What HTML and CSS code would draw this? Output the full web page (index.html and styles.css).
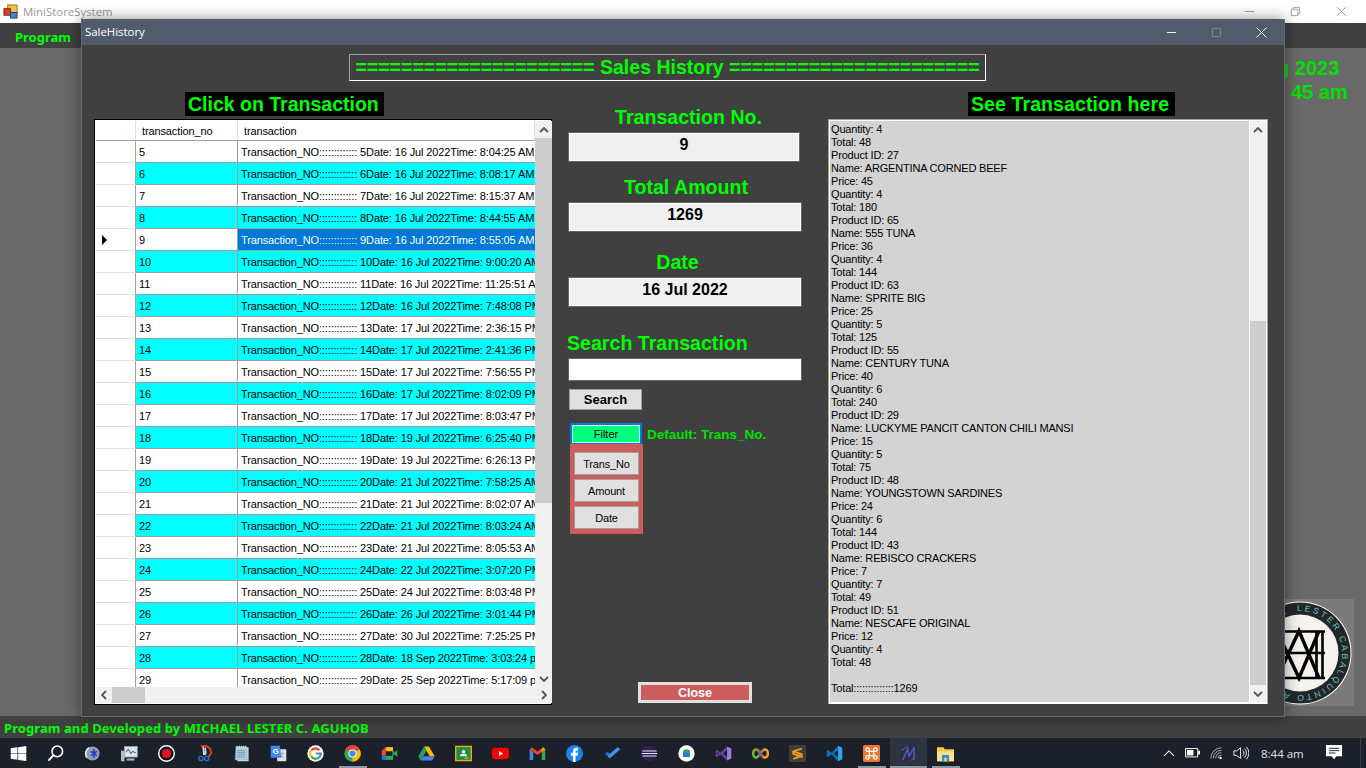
FILE: index.html
```html
<!DOCTYPE html>
<html lang="en">
<head>
    <meta charset="UTF-8">
    <title>MiniStoreSystem</title>
    <link rel="stylesheet" href="styles.css">
</head>
<body>
<div class="desktop">
    <div class="main-title">
        <svg class="app-icon" viewBox="0 0 16 16"><rect x="5" y="1" width="10" height="8" fill="#f0c040" stroke="#a07010"/><rect x="1" y="5" width="7" height="7" fill="#d84030" stroke="#802010"/><rect x="8" y="9" width="7" height="6" fill="#5080d0" stroke="#204080"/></svg>
        <span class="main-name">MiniStoreSystem</span>
        <div class="win-buttons main-buttons">
            <svg viewBox="0 0 12 12"><path d="M1 6h10" stroke="#999" fill="none"/></svg>
            <svg viewBox="0 0 12 12"><path d="M1.5 3.5h7v7h-7zM3.5 3.5v-2h7v7h-2" stroke="#999" fill="none"/></svg>
            <svg viewBox="0 0 12 12"><path d="M1 1l10 10M11 1L1 11" stroke="#999" fill="none"/></svg>
        </div>
    </div>
    <div class="menu-strip"><span class="menu-item">Program</span></div>
    <div class="main-area">
        <div class="clock-text">
            <div class="clock-date">g 2023</div>
            <div class="clock-time">45 am</div>
        </div>
        <div class="logo-square">
            <svg class="logo" viewBox="0 0 106 106">
                <defs><path id="ring" d="M53 11a42 42 0 1 1-.01 0"/></defs>
                <circle cx="53" cy="53" r="51.500" fill="#fff"/>
                <circle cx="53" cy="53" r="50.500" fill="#22282a"/>
                <circle cx="53" cy="53" r="38.500" fill="#f6f3ee"/>
                <text class="logo-ring" fill="#6fc4c0" transform="rotate(-4 53 53)"><textPath href="#ring">LESTER CABALQUINTO AGUHOB MICHAEL</textPath></text>
                <path d="M24 31.500h54M24 53h54M24 78h54M69.500 31v47M75.500 31v47" stroke="#000" stroke-width="2.600" fill="none"/>
                <path d="M30 31l22 47 20-47M30 78l22-47 20 47" stroke="#000" stroke-width="3.400" fill="none"/>
            </svg>
        </div>
    </div>
    <div class="status-strip">Program and Developed by MICHAEL LESTER C. AGUHOB</div>

    <div class="taskbar">
        <div class="task-icons">
            <span class="task"><svg viewBox="0 0 24 24"><path fill="#fff" d="M1 4.500l9.500-1.300V11.500H1zM11.500 3L23 1.500v10H11.500zM1 12.500h9.500v8.300L1 19.500zM11.500 12.500H23v10L11.500 21z"/></svg></span>
            <span class="task"><svg viewBox="0 0 24 24"><circle cx="14.500" cy="9" r="7.500" fill="none" stroke="#fff" stroke-width="2.200"/><path d="M9 14.500L2 22" stroke="#fff" stroke-width="2.800"/></svg></span>
            <span class="task"><svg viewBox="0 0 24 24"><circle cx="12" cy="12" r="10" fill="#8d9bb5"/><path d="M7 4a10 10 0 0 0-3 14" stroke="#dfe6f0" stroke-width="2.500" fill="none"/><path d="M14 6v12M10 9l8 6M18 9l-8 6" stroke="#2240d0" stroke-width="2.400"/></svg></span>
            <span class="task"><svg viewBox="0 0 24 24"><rect x="5" y="2" width="18" height="15" fill="#dfe6ea" stroke="#9aa4ac"/><path d="M7 10l3-4 4 6 2-3 5 2" stroke="#2f7fc4" fill="none" stroke-width="1.600"/><rect x="0" y="8" width="5" height="15" fill="#b8bec4"/><rect x="8" y="19" width="11" height="3" fill="#aab0b6"/></svg></span>
            <span class="task"><svg viewBox="0 0 24 24"><circle cx="12" cy="12" r="11" fill="#111" stroke="#fff" stroke-width="2"/><circle cx="12" cy="12" r="6.500" fill="#e81123"/></svg></span>
            <span class="task"><svg viewBox="0 0 24 24"><path d="M12 1a11 9 0 0 1 8 13l-3 3" stroke="#c8401c" stroke-width="3" fill="none"/><path d="M7 2a10 8 0 0 1 5-1" stroke="#c8401c" stroke-width="3" fill="none"/><path d="M11 2l2 12h-3l-1-12zM14 3l1 9-2 3-1-11z" fill="#d4d8dc"/><circle cx="7" cy="19" r="3" fill="none" stroke="#1f6fd8" stroke-width="2"/><circle cx="15" cy="19" r="3" fill="none" stroke="#1f6fd8" stroke-width="2"/></svg></span>
            <span class="task"><svg viewBox="0 0 24 24"><path d="M8 3h14v20H6z" fill="#e8dcc0"/><path d="M4 2h15l1 19H3z" fill="#a9d4e4" stroke="#7b97a5" stroke-width=".6"/><path d="M6 1v3M9 1v3M12 1v3M15 1v3M18 1v3" stroke="#dfe8ee" stroke-width="1.200"/><path d="M6 8h11M6 11h11M6 14h11M5.500 17h11" stroke="#5d7e8e"/></svg></span>
            <span class="task"><svg viewBox="0 0 24 24"><rect x="10" y="6" width="13" height="17" rx="1" fill="#dfe1e5"/><path d="M14 12h6M17 10v2M15 18l4-6M15 13l4 5" stroke="#9aa0a6" fill="none"/><path d="M2 1h12l2 17H2a1 1 0 0 1-1-1V2a1 1 0 0 1 1-1z" fill="#4285f4"/><text class="icon-letter" x="8" y="13" fill="#fff">G</text></svg></span>
            <span class="task"><svg viewBox="0 0 24 24"><circle cx="12" cy="12" r="11.500" fill="#fff"/><path d="M17.500 7.500A7.500 7.500 0 0 0 6 7.500" stroke="#ea4335" stroke-width="3" fill="none"/><path d="M6 7.500a7.500 7.500 0 0 0 0 9" stroke="#fbbc05" stroke-width="3" fill="none"/><path d="M6 16.500a7.500 7.500 0 0 0 12 0" stroke="#34a853" stroke-width="3" fill="none"/><path d="M18 16.500a7.500 7.500 0 0 0 1.500-4.500H12.500" stroke="#4285f4" stroke-width="3" fill="none"/></svg></span>
            <span class="task"><svg viewBox="0 0 24 24"><circle cx="12" cy="12" r="11.500" fill="#34a853"/><path d="M12 12L2 6.200A11.500 11.500 0 0 1 22 6.200z" fill="#ea4335"/><path d="M12 12l10-5.800A11.500 11.500 0 0 1 12 23.500z" fill="#fbbc05"/><circle cx="12" cy="12" r="5.800" fill="#fff"/><circle cx="12" cy="12" r="4.400" fill="#4285f4"/></svg></span>
            <span class="task"><svg viewBox="0 0 24 24"><path d="M1 8l5-5h11v6H7v6H1z" fill="#ea4335"/><path d="M1 15h6v6H3a2 2 0 0 1-2-2z" fill="#1a73e8"/><path d="M7 15h10v6H7z" fill="#34a853"/><path d="M7 3h10v6H7z" fill="#fbbc05"/><path d="M7 9h9v6H7z" fill="#1b2029"/><path d="M16 8.500h2v7h-2z" fill="#34a853"/><path d="M17 12l6-5v10z" fill="#34a853"/></svg></span>
            <span class="task"><svg viewBox="0 0 24 24"><path d="M8.500 2h7l8 14h-7z" fill="#fbbc05"/><path d="M8.500 2L.5 16l3.500 6 8-14z" fill="#1ea362"/><path d="M4 22h16l3.500-6H8z" fill="#4285f4"/></svg></span>
            <span class="task"><svg viewBox="0 0 24 24"><rect x="1" y="2" width="22" height="20" fill="#1e8e3e" stroke="#f2a60c" stroke-width="2"/><circle cx="12" cy="9.500" r="2.500" fill="#fff"/><path d="M7 16a5 3.500 0 0 1 10 0z" fill="#fff"/><path d="M14 18.500h5" stroke="#fff"/></svg></span>
            <span class="task"><svg viewBox="0 0 24 24"><rect x="0" y="4" width="24" height="16" rx="4" fill="#f00"/><path d="M10 8.500l5.500 3.500-5.500 3.500z" fill="#fff"/></svg></span>
            <span class="task"><svg viewBox="0 0 24 24"><path d="M1 6v15h5V10z" fill="#4285f4"/><path d="M23 6v15h-5V10z" fill="#34a853"/><path d="M1 6l11 8 11-8-3-3-8 6-8-6z" fill="#ea4335"/><path d="M20 3l3 3-5 4V6z" fill="#fbbc05"/></svg></span>
            <span class="task"><svg viewBox="0 0 24 24"><circle cx="12" cy="12" r="12" fill="#1b86f0"/><path d="M10 24V15H7v-4h3V8.500C10 5.500 12 4 14.500 4h2.500v4h-2c-1 0-1.500.5-1.500 1.500V11h3.500l-.5 4h-3v9z" fill="#fff"/></svg></span>
            <span class="task"><svg viewBox="0 0 24 24"><path d="M1 12l7 7 3-4-6-6z" fill="#2564c8"/><path d="M8 19L23 6l-4-3L5 15z" fill="#3d94ee"/></svg></span>
            <span class="task"><svg viewBox="0 0 24 24"><circle cx="12" cy="12" r="11" fill="#2c2255"/><path d="M2 8.500h20M1 12h22M2 15.500h20" stroke="#e8e4f0" stroke-width="1.600"/></svg></span>
            <span class="task"><svg viewBox="0 0 24 24"><circle cx="12" cy="12" r="11.500" fill="#fff"/><path d="M7 10h10v7H7z" fill="#2a7fc0"/><path d="M7 10a5 4 0 0 1 10 0z" fill="#3aa060"/></svg></span>
            <span class="task"><svg viewBox="0 0 24 24"><path d="M1 8l2-1 5 4L17 2v20l-9-9-5 4-2-1z" fill="#6a3fb0"/><path d="M17 2l6 3v14l-6 3z" fill="#a07ae0"/><path d="M17 7l-6 5 6 5z" fill="#1b2029"/><path d="M3 9.500v5L5.500 12z" fill="#1b2029"/></svg></span>
            <span class="task"><svg viewBox="0 0 24 24"><path d="M12 12C9 7 6 5 3.500 7S1 15 3.500 17 9 17 12 12" fill="none" stroke="#6fb53c" stroke-width="3.400"/><path d="M12 12c3-5 6-7 8.500-5s2.500 8 0 10-5.500 0-8.500-5" fill="none" stroke="#f5a623" stroke-width="3.400"/><path d="M8 7l7 10" stroke="#e8432a" stroke-width="3.400"/><path d="M16 7l-6 8" stroke="#2b84d8" stroke-width="2.600"/></svg></span>
            <span class="task"><svg viewBox="0 0 24 24"><rect x="0" y="0" width="24" height="24" rx="1" fill="#3f3f3f"/><path d="M18 5L6 9v3.500l12 4V13L6 9M6 19.500l12-4" fill="none" stroke="#f39c12" stroke-width="2.600"/></svg></span>
            <span class="task"><svg viewBox="0 0 24 24"><path d="M1 8l2-1 5 4L17 1v22l-9-10-5 4-2-1z" fill="#0a72b8"/><path d="M17 1l6 3v16l-6 3z" fill="#2aa5ee"/><path d="M17 7l-6 5 6 5z" fill="#1b2029"/></svg></span>
            <span class="task"><svg viewBox="0 0 24 24"><rect x="0" y="0" width="24" height="24" rx="2" fill="#ee7733"/><path d="M9 9H7a2.500 2.500 0 1 1 2-2zM15 9V7a2.500 2.500 0 1 1 2 2zM9 15v2a2.500 2.500 0 1 1-2-2zM15 15h2a2.500 2.500 0 1 1-2 2zM9 9h6v6H9z" fill="none" stroke="#fff" stroke-width="1.800"/></svg></span>
            <span class="task task-active"><svg viewBox="0 0 24 24"><rect x="1" y="1" width="22" height="22" fill="#2a2a4c"/><path d="M4 21L11 5l2 11L20 3v18" stroke="#4a5ab0" stroke-width="2.400" fill="none"/><path d="M2 8l8-6M16 22l6-8" stroke="#5a4a7c" stroke-width="2"/></svg></span>
            <span class="task task-open"><svg viewBox="0 0 24 24"><path d="M0 3h9l2 3h13v17H0z" fill="#f7c948"/><path d="M0 9h24v14H0z" fill="#fde38a"/><path d="M7 14h10v9H7z" fill="#2f8fd8"/><path d="M10.500 18h3v5h-3z" fill="#fde38a"/></svg></span>
        </div>
        <div class="tray">
            <svg class="tray-chevron" viewBox="0 0 14 8"><path d="M1 7l6-6 6 6" stroke="#fff" stroke-width="1.200" fill="none"/></svg>
            <svg class="tray-battery" viewBox="0 0 16 10"><path d="M.5.500h13v9H.5z" stroke="#fff" fill="none"/><path d="M2 2h7v6H2z" fill="#fff"/><path d="M14 3h2v4h-2z" fill="#fff"/></svg>
            <svg class="tray-wifi" viewBox="0 0 16 16"><path d="M1 14A13 13 0 0 1 14 1M4 14A10 10 0 0 1 14 4M7 14a7 7 0 0 1 7-7M10 14a4 4 0 0 1 4-4" stroke="#ccc" fill="none"/><circle cx="13" cy="13.500" r="1.500" fill="#fff"/></svg>
            <svg class="tray-sound" viewBox="0 0 18 16"><path d="M1 5.500h3L8.500 2v12L4 10.500H1z" stroke="#fff" fill="none"/><path d="M11 5a4 4 0 0 1 0 6M13 3a7 7 0 0 1 0 10M15 1a10 10 0 0 1 0 14" stroke="#fff" fill="none"/></svg>
            <span class="tray-time">8:44 am</span>
            <svg class="tray-note" viewBox="0 0 18 16"><path d="M0 0h17v12H11l-2.500 3L6 12H0z" fill="#fff"/><path d="M3 3.500h11M3 6h11M3 8.500h7" stroke="#1b2029"/></svg>
            <span class="show-desktop"></span>
        </div>
    </div>

    <div class="dialog">
        <div class="dialog-title">
            <span class="dialog-name">SaleHistory</span>
            <div class="win-buttons dialog-buttons">
                <svg viewBox="0 0 12 12"><path d="M1 6h10" stroke="#fff" fill="none"/></svg>
                <svg viewBox="0 0 12 12"><path d="M1.500 1.500h9v9h-9z" stroke="#7d8896" fill="none"/></svg>
                <svg viewBox="0 0 12 12"><path d="M.5.500l11 11M11.500.500l-11 11" stroke="#fff" fill="none"/></svg>
            </div>
        </div>
        <div class="dialog-body">
            <div class="banner">===================== Sales History ======================</div>
            <div class="columns">
                <section class="col-grid">
                    <h2 class="black-label label-click">Click on Transaction</h2>
                    <div class="grid-view">
                        <div class="grid-clip">
                            <table class="rows">
                                <colgroup><col class="c-head"><col class="c-no"><col class="c-text"></colgroup>
                                <thead><tr><th></th><th>transaction_no</th><th>transaction</th></tr></thead>
                                <tbody>
                                    <tr><td></td><td>5</td><td>Transaction_NO::::::::::::: 5Date: 16 Jul 2022Time: 8:04:25 AM</td></tr>
                                    <tr class="alt"><td></td><td>6</td><td>Transaction_NO::::::::::::: 6Date: 16 Jul 2022Time: 8:08:17 AM</td></tr>
                                    <tr><td></td><td>7</td><td>Transaction_NO::::::::::::: 7Date: 16 Jul 2022Time: 8:15:37 AM</td></tr>
                                    <tr class="alt"><td></td><td>8</td><td>Transaction_NO::::::::::::: 8Date: 16 Jul 2022Time: 8:44:55 AM</td></tr>
                                    <tr class="sel"><td><span class="row-arrow"></span></td><td>9</td><td>Transaction_NO::::::::::::: 9Date: 16 Jul 2022Time: 8:55:05 AM</td></tr>
                                    <tr class="alt"><td></td><td>10</td><td>Transaction_NO::::::::::::: 10Date: 16 Jul 2022Time: 9:00:20 AM</td></tr>
                                    <tr><td></td><td>11</td><td>Transaction_NO::::::::::::: 11Date: 16 Jul 2022Time: 11:25:51 AM</td></tr>
                                    <tr class="alt"><td></td><td>12</td><td>Transaction_NO::::::::::::: 12Date: 16 Jul 2022Time: 7:48:08 PM</td></tr>
                                    <tr><td></td><td>13</td><td>Transaction_NO::::::::::::: 13Date: 17 Jul 2022Time: 2:36:15 PM</td></tr>
                                    <tr class="alt"><td></td><td>14</td><td>Transaction_NO::::::::::::: 14Date: 17 Jul 2022Time: 2:41:36 PM</td></tr>
                                    <tr><td></td><td>15</td><td>Transaction_NO::::::::::::: 15Date: 17 Jul 2022Time: 7:56:55 PM</td></tr>
                                    <tr class="alt"><td></td><td>16</td><td>Transaction_NO::::::::::::: 16Date: 17 Jul 2022Time: 8:02:09 PM</td></tr>
                                    <tr><td></td><td>17</td><td>Transaction_NO::::::::::::: 17Date: 17 Jul 2022Time: 8:03:47 PM</td></tr>
                                    <tr class="alt"><td></td><td>18</td><td>Transaction_NO::::::::::::: 18Date: 19 Jul 2022Time: 6:25:40 PM</td></tr>
                                    <tr><td></td><td>19</td><td>Transaction_NO::::::::::::: 19Date: 19 Jul 2022Time: 6:26:13 PM</td></tr>
                                    <tr class="alt"><td></td><td>20</td><td>Transaction_NO::::::::::::: 20Date: 21 Jul 2022Time: 7:58:25 AM</td></tr>
                                    <tr><td></td><td>21</td><td>Transaction_NO::::::::::::: 21Date: 21 Jul 2022Time: 8:02:07 AM</td></tr>
                                    <tr class="alt"><td></td><td>22</td><td>Transaction_NO::::::::::::: 22Date: 21 Jul 2022Time: 8:03:24 AM</td></tr>
                                    <tr><td></td><td>23</td><td>Transaction_NO::::::::::::: 23Date: 21 Jul 2022Time: 8:05:53 AM</td></tr>
                                    <tr class="alt"><td></td><td>24</td><td>Transaction_NO::::::::::::: 24Date: 22 Jul 2022Time: 3:07:20 PM</td></tr>
                                    <tr><td></td><td>25</td><td>Transaction_NO::::::::::::: 25Date: 24 Jul 2022Time: 8:03:48 PM</td></tr>
                                    <tr class="alt"><td></td><td>26</td><td>Transaction_NO::::::::::::: 26Date: 26 Jul 2022Time: 3:01:44 PM</td></tr>
                                    <tr><td></td><td>27</td><td>Transaction_NO::::::::::::: 27Date: 30 Jul 2022Time: 7:25:25 PM</td></tr>
                                    <tr class="alt"><td></td><td>28</td><td>Transaction_NO::::::::::::: 28Date: 18 Sep 2022Time: 3:03:24 pm</td></tr>
                                    <tr><td></td><td>29</td><td>Transaction_NO::::::::::::: 29Date: 25 Sep 2022Time: 5:17:09 pm</td></tr>
                                </tbody>
                            </table>
                        </div>
                        <div class="vbar grid-vbar">
                            <svg class="arrow" viewBox="0 0 10 6"><path d="M1 5l4-4 4 4" stroke="#555" stroke-width="1.800" fill="none"/></svg>
                            <div class="thumb"></div>
                            <div class="vbar-rest"></div>
                            <svg class="arrow" viewBox="0 0 10 6"><path d="M1 1l4 4 4-4" stroke="#555" stroke-width="1.800" fill="none"/></svg>
                        </div>
                        <div class="hbar">
                            <svg class="arrow-h" viewBox="0 0 6 10"><path d="M5 1L1 5l4 4" stroke="#555" stroke-width="1.800" fill="none"/></svg>
                            <div class="hthumb"></div>
                            <div class="hbar-rest"></div>
                            <svg class="arrow-h" viewBox="0 0 6 10"><path d="M1 1l4 4-4 4" stroke="#555" stroke-width="1.800" fill="none"/></svg>
                        </div>
                    </div>
                </section>

                <section class="col-info">
                    <h2 class="info-label label-no">Transaction No.</h2>
                    <div class="value-box value-first">9</div>
                    <h2 class="info-label label-total">Total Amount</h2>
                    <div class="value-box value-wide">1269</div>
                    <h2 class="info-label label-date">Date</h2>
                    <div class="value-box value-wide">16 Jul 2022</div>
                    <h2 class="info-label label-search">Search Transaction</h2>
                    <input class="search-input" type="text">
                    <button class="btn btn-search">Search</button>
                    <div class="filter-row">
                        <button class="btn-filter">Filter</button>
                        <span class="filter-default">Default: Trans_No.</span>
                    </div>
                    <div class="filter-panel">
                        <button class="btn btn-opt">Trans_No</button>
                        <button class="btn btn-opt">Amount</button>
                        <button class="btn btn-opt">Date</button>
                    </div>
                    <button class="btn-close">Close</button>
                </section>

                <section class="col-receipt">
                    <h2 class="black-label label-see">See Transaction here</h2>
                    <div class="receipt">
                        <pre class="receipt-text">Quantity: 4
Total: 48
Product ID: 27
Name: ARGENTINA CORNED BEEF
Price: 45
Quantity: 4
Total: 180
Product ID: 65
Name: 555 TUNA
Price: 36
Quantity: 4
Total: 144
Product ID: 63
Name: SPRITE BIG
Price: 25
Quantity: 5
Total: 125
Product ID: 55
Name: CENTURY TUNA
Price: 40
Quantity: 6
Total: 240
Product ID: 29
Name: LUCKYME PANCIT CANTON CHILI MANSI
Price: 15
Quantity: 5
Total: 75
Product ID: 48
Name: YOUNGSTOWN SARDINES
Price: 24
Quantity: 6
Total: 144
Product ID: 43
Name: REBISCO CRACKERS
Price: 7
Quantity: 7
Total: 49
Product ID: 51
Name: NESCAFE ORIGINAL
Price: 12
Quantity: 4
Total: 48

Total::::::::::::::1269</pre>
                        <div class="vbar receipt-vbar">
                            <svg class="arrow" viewBox="0 0 10 6"><path d="M1 5l4-4 4 4" stroke="#555" stroke-width="1.800" fill="none"/></svg>
                            <div class="vbar-rest"></div>
                            <div class="thumb"></div>
                            <svg class="arrow" viewBox="0 0 10 6"><path d="M1 1l4 4 4-4" stroke="#555" stroke-width="1.800" fill="none"/></svg>
                        </div>
                    </div>
                </section>
            </div>
        </div>
    </div>
</div>
</body>
</html>
```

FILE: styles.css
```css
* {
    box-sizing: border-box;
}
body {
    margin: 0;
    font-family: "Liberation Sans", Arial, sans-serif;
}
h2 {
    margin: 0;
}
button {
    font-family: inherit;
    padding: 0;
}
.desktop {
    position: relative;
    width: 1366px;
    height: 768px;
    overflow: hidden;
    display: flex;
    flex-direction: column;
    background-color: #696969;
}

/* main window behind the dialog */
.main-title {
    height: 23px;
    background-color: #fff;
    display: flex;
    align-items: center;
    padding-left: 3px;
}
.app-icon {
    width: 15px;
    height: 15px;
}
.main-name {
    margin-left: 5px;
    font-family: "Open Sans", sans-serif;
    font-size: 11.4px;
    color: #999;
}
.win-buttons {
    display: flex;
    margin-left: auto;
}
.win-buttons svg {
    width: 11px;
    height: 11px;
}
.main-buttons {
    gap: 35px;
    padding-right: 19px;
}
.menu-strip {
    height: 25px;
    background-color: #404040;
    padding: 5px 0 0 15px;
}
.menu-item,
.status-strip {
    font-family: "Noto Sans", sans-serif;
    font-weight: bold;
    font-size: 13px;
    line-height: 18px;
    color: #00ff00;
}
.main-area {
    flex: 1;
    position: relative;
}
.clock-text {
    position: absolute;
    top: 8px;
    left: 1277px;
    color: #00e000;
    font-weight: bold;
    font-size: 20px;
    line-height: 24px;
}
.clock-time {
    margin-left: 14px;
}
.logo-square {
    position: absolute;
    left: 1246px;
    top: 551px;
    width: 108px;
    height: 107px;
    background-color: #7b7b7b;
    padding: 1px 0 0 .5px;
}
.logo {
    display: block;
    width: 106px;
    height: 106px;
}
.logo-ring {
    font-size: 8.5px;
    letter-spacing: 2.4px;
}
.status-strip {
    height: 22px;
    background-color: #404040;
    padding: 3px 0 0 4px;
    letter-spacing: .08px;
}

/* taskbar */
.taskbar {
    height: 30px;
    background-color: #1b2029;
    display: flex;
    align-items: stretch;
}
.task-icons {
    display: flex;
    padding-left: 0;
}
.task {
    width: 37.1px;
    display: flex;
    align-items: center;
    justify-content: center;
    position: relative;
}
.task svg {
    width: 17px;
    height: 17px;
}
.task:nth-child(10)::after,
.task-open::after,
.task:nth-child(24)::after {
    content: "";
    position: absolute;
    left: 5px;
    right: 4px;
    bottom: 0;
    height: 2px;
    background-color: #8a98a8;
}
.task-active::after {
    content: "";
    position: absolute;
    left: 0;
    right: 0;
    bottom: 0;
    height: 2px;
    background-color: #8a98a8;
}
.task-active {
    background-color: #2c3440;
}
.icon-letter {
    font-size: 11px;
    font-weight: bold;
    text-anchor: middle;
}
.tray {
    margin-left: auto;
    display: flex;
    align-items: center;
    color: #fff;
    position: relative;
    width: 205px;
}
.tray svg {
    display: block;
}
.tray-chevron {
    width: 12px;
    margin-left: 2px;
}
.tray-battery {
    width: 15px;
    margin-left: 10px;
}
.tray-wifi {
    width: 13px;
    margin-left: 10px;
}
.tray-sound {
    width: 16px;
    margin-left: 10px;
}
.tray-time {
    margin-left: 12px;
    font-family: "Open Sans", sans-serif;
    font-size: 11.5px;
    color: #e0e0e0;
}
.tray-note {
    width: 17px;
    margin-left: 22px;
}
.show-desktop {
    position: absolute;
    right: 5px;
    top: 0;
    bottom: 0;
    border-left: 1px solid #3a404a;
}

/* sales history dialog */
.dialog {
    position: absolute;
    left: 81px;
    top: 19px;
    width: 1204px;
    height: 698px;
    background-color: #404040;
    border: 1px solid #5d6c80;
    border-top: 0;
    box-shadow: 0 0 14px rgba(0, 0, 0, 0.45);
    display: flex;
    flex-direction: column;
}
.dialog-title {
    height: 26px;
    background-color: #505c6e;
    color: #fff;
    font-family: "Open Sans", sans-serif;
    font-size: 11.4px;
    display: flex;
    align-items: center;
    padding-left: 3px;
}
.dialog-name {
    margin-top: -2px;
}
.dialog-buttons {
    gap: 34px;
    padding-right: 17px;
}
.dialog-body {
    flex: 1;
    display: flex;
    flex-direction: column;
}
.banner {
    align-self: flex-start;
    width: 637px;
    height: 27px;
    margin: 9px 0 0 267px;
    border: 1px solid;
    border-color: #a0a0a0 #fff #fff #a0a0a0;
    color: #00ff00;
    font-weight: bold;
    font-size: 19.5px;
    line-height: 24px;
    text-align: center;
    white-space: nowrap;
}
.columns {
    display: flex;
    padding-left: 12px;
    margin-top: 11px;
}
.black-label {
    align-self: flex-start;
    height: 24px;
    background-color: #000;
    color: #00ff00;
    font-size: 19.5px;
    line-height: 24px;
    white-space: nowrap;
}
.label-click {
    margin-left: 91px;
    padding: 0 5px 0 3px;
}
.label-see {
    margin-left: 140px;
    padding: 0 6px 0 3px;
    letter-spacing: .1px;
}

/* left column: data grid */
.col-grid {
    width: 459px;
    display: flex;
    flex-direction: column;
}
.grid-view {
    margin-top: 3px;
    width: 458px;
    height: 586px;
    border: 1px solid #000;
    background-color: #fff;
    padding: 1px;
    display: grid;
    grid-template-columns: 439px 17px;
    grid-template-rows: 566px 16px;
    color: #000;
}
.grid-clip {
    overflow: hidden;
}
.rows {
    border-collapse: separate;
    border-spacing: 0;
    table-layout: fixed;
    width: 439px;
    font-size: 11px;
    letter-spacing: -.12px;
}
.c-head {
    width: 40px;
}
.c-no {
    width: 102px;
}
.c-text {
    width: 297px;
}
.rows th {
    height: 20px;
    padding: 0 0 0 6px;
    font-weight: normal;
    text-align: left;
    border-right: 1px solid #e0e0e0;
    border-bottom: 1px solid #a0a0a0;
}
.rows td {
    height: 22px;
    padding: 0 0 0 3px;
    white-space: nowrap;
    overflow: hidden;
    border-right: 1px solid #a0a0a0;
    border-bottom: 1px solid #a0a0a0;
}
.rows td:first-child {
    position: relative;
    border-bottom-color: #e0e0e0;
    background-color: #fff;
}
.rows td:last-child {
    border-right: 0;
}
.alt td {
    background-color: #00ffff;
}
.sel td:last-child {
    background-color: #0078d7;
    color: #fff;
}
.row-arrow {
    position: absolute;
    left: 6px;
    top: 6px;
    border-left: 5px solid #000;
    border-top: 5px solid transparent;
    border-bottom: 5px solid transparent;
}

/* scrollbars */
.vbar {
    background-color: #f0f0f0;
    display: flex;
    flex-direction: column;
    align-items: stretch;
}
.arrow {
    width: 10px;
    height: 6px;
    margin: 5.500px auto;
    flex-shrink: 0;
}
.grid-vbar .thumb {
    height: 365px;
    background-color: #cdcdcd;
}
.vbar-rest {
    flex: 1;
}
.hbar {
    grid-column: 1 / 3;
    background-color: #f0f0f0;
    display: flex;
    align-items: center;
    height: 16px;
}
.arrow-h {
    width: 6px;
    height: 10px;
    margin: 0 5px;
    flex-shrink: 0;
}
.hthumb {
    width: 33px;
    height: 16px;
    background-color: #cdcdcd;
}
.hbar-rest {
    flex: 1;
}

/* middle column */
.col-info {
    width: 234px;
    margin-left: 15px;
    display: flex;
    flex-direction: column;
    align-items: flex-start;
    position: relative;
}
.info-label {
    color: #00ff00;
    font-size: 19.6px;
    line-height: 24px;
    align-self: center;
    white-space: nowrap;
}
.label-no {
    margin-top: 13px;
    margin-left: 7px;
}
.label-total {
    margin-top: 13px;
    margin-left: 2px;
}
.label-date {
    margin-top: 18px;
    margin-left: -15px;
}
.label-search {
    align-self: flex-start;
    margin-top: 24px;
    margin-left: -1px;
}
.value-box {
    height: 30px;
    margin-top: 3px;
    border: 1px solid #696969;
    box-shadow: inset 0 0 0 1px #fff;
    background-color: #f0f0f0;
    color: #000;
    font-weight: bold;
    font-size: 16px;
    line-height: 24px;
    text-align: center;
}
.value-first {
    width: 232px;
}
.value-wide {
    width: 234px;
}
.search-input {
    width: 234px;
    height: 23px;
    margin-top: 3px;
    background-color: #fff;
    border: 1px solid #696969;
}
.btn {
    background-color: #e0e0e0;
    border: 1px solid #a0a0a0;
    color: #000;
    font-size: 11px;
}
.btn-search {
    width: 73px;
    height: 21px;
    margin: 8px 0 0 1px;
    font-weight: bold;
    font-size: 13px;
}
.filter-row {
    display: flex;
    align-items: center;
    height: 22px;
    margin: 13px 0 0 2px;
}
.btn-filter {
    width: 72px;
    height: 22px;
    background-color: #00ff7f;
    border: 2px solid #0078d7;
    outline: 1px solid #e0f0f0;
    outline-offset: -3px;
    font-size: 11px;
    color: #000;
}
.filter-default {
    margin-left: 5px;
    color: #00e000;
    font-weight: bold;
    font-size: 13.5px;
}
.filter-panel {
    width: 73px;
    height: 90px;
    margin: -1px 0 0 2px;
    padding: 8px 4px 0;
    background-color: #cd5c5c;
    display: flex;
    flex-direction: column;
    gap: 4px;
}
.btn-opt {
    height: 23px;
    letter-spacing: -.15px;
}
.btn-close {
    position: absolute;
    left: 70px;
    top: 590px;
    width: 114px;
    height: 21px;
    background-color: #cd5c5c;
    border: 3px solid #e0e0e0;
    color: #fff;
    font-weight: bold;
    font-size: 12.5px;
}

/* right column: receipt text box */
.col-receipt {
    width: 440px;
    margin-left: 26px;
    display: flex;
    flex-direction: column;
}
.receipt {
    margin-top: 3px;
    width: 440px;
    height: 585px;
    border: 1px solid;
    border-color: #a0a0a0 #a0a0a0 #fff #a0a0a0;
    background-color: #fff;
    padding: 1px;
    display: flex;
    gap: 1px;
}
.receipt-text {
    flex: 1;
    margin: 0;
    padding: 2px 0 0 1px;
    background-color: #d3d3d3;
    color: #000;
    font-family: "Liberation Sans", Arial, sans-serif;
    font-size: 11px;
    letter-spacing: -.18px;
    line-height: 13px;
    overflow: hidden;
}
.receipt-vbar {
    width: 16px;
}
.receipt-vbar .thumb {
    height: 364px;
    background-color: #cdcdcd;
}
```
